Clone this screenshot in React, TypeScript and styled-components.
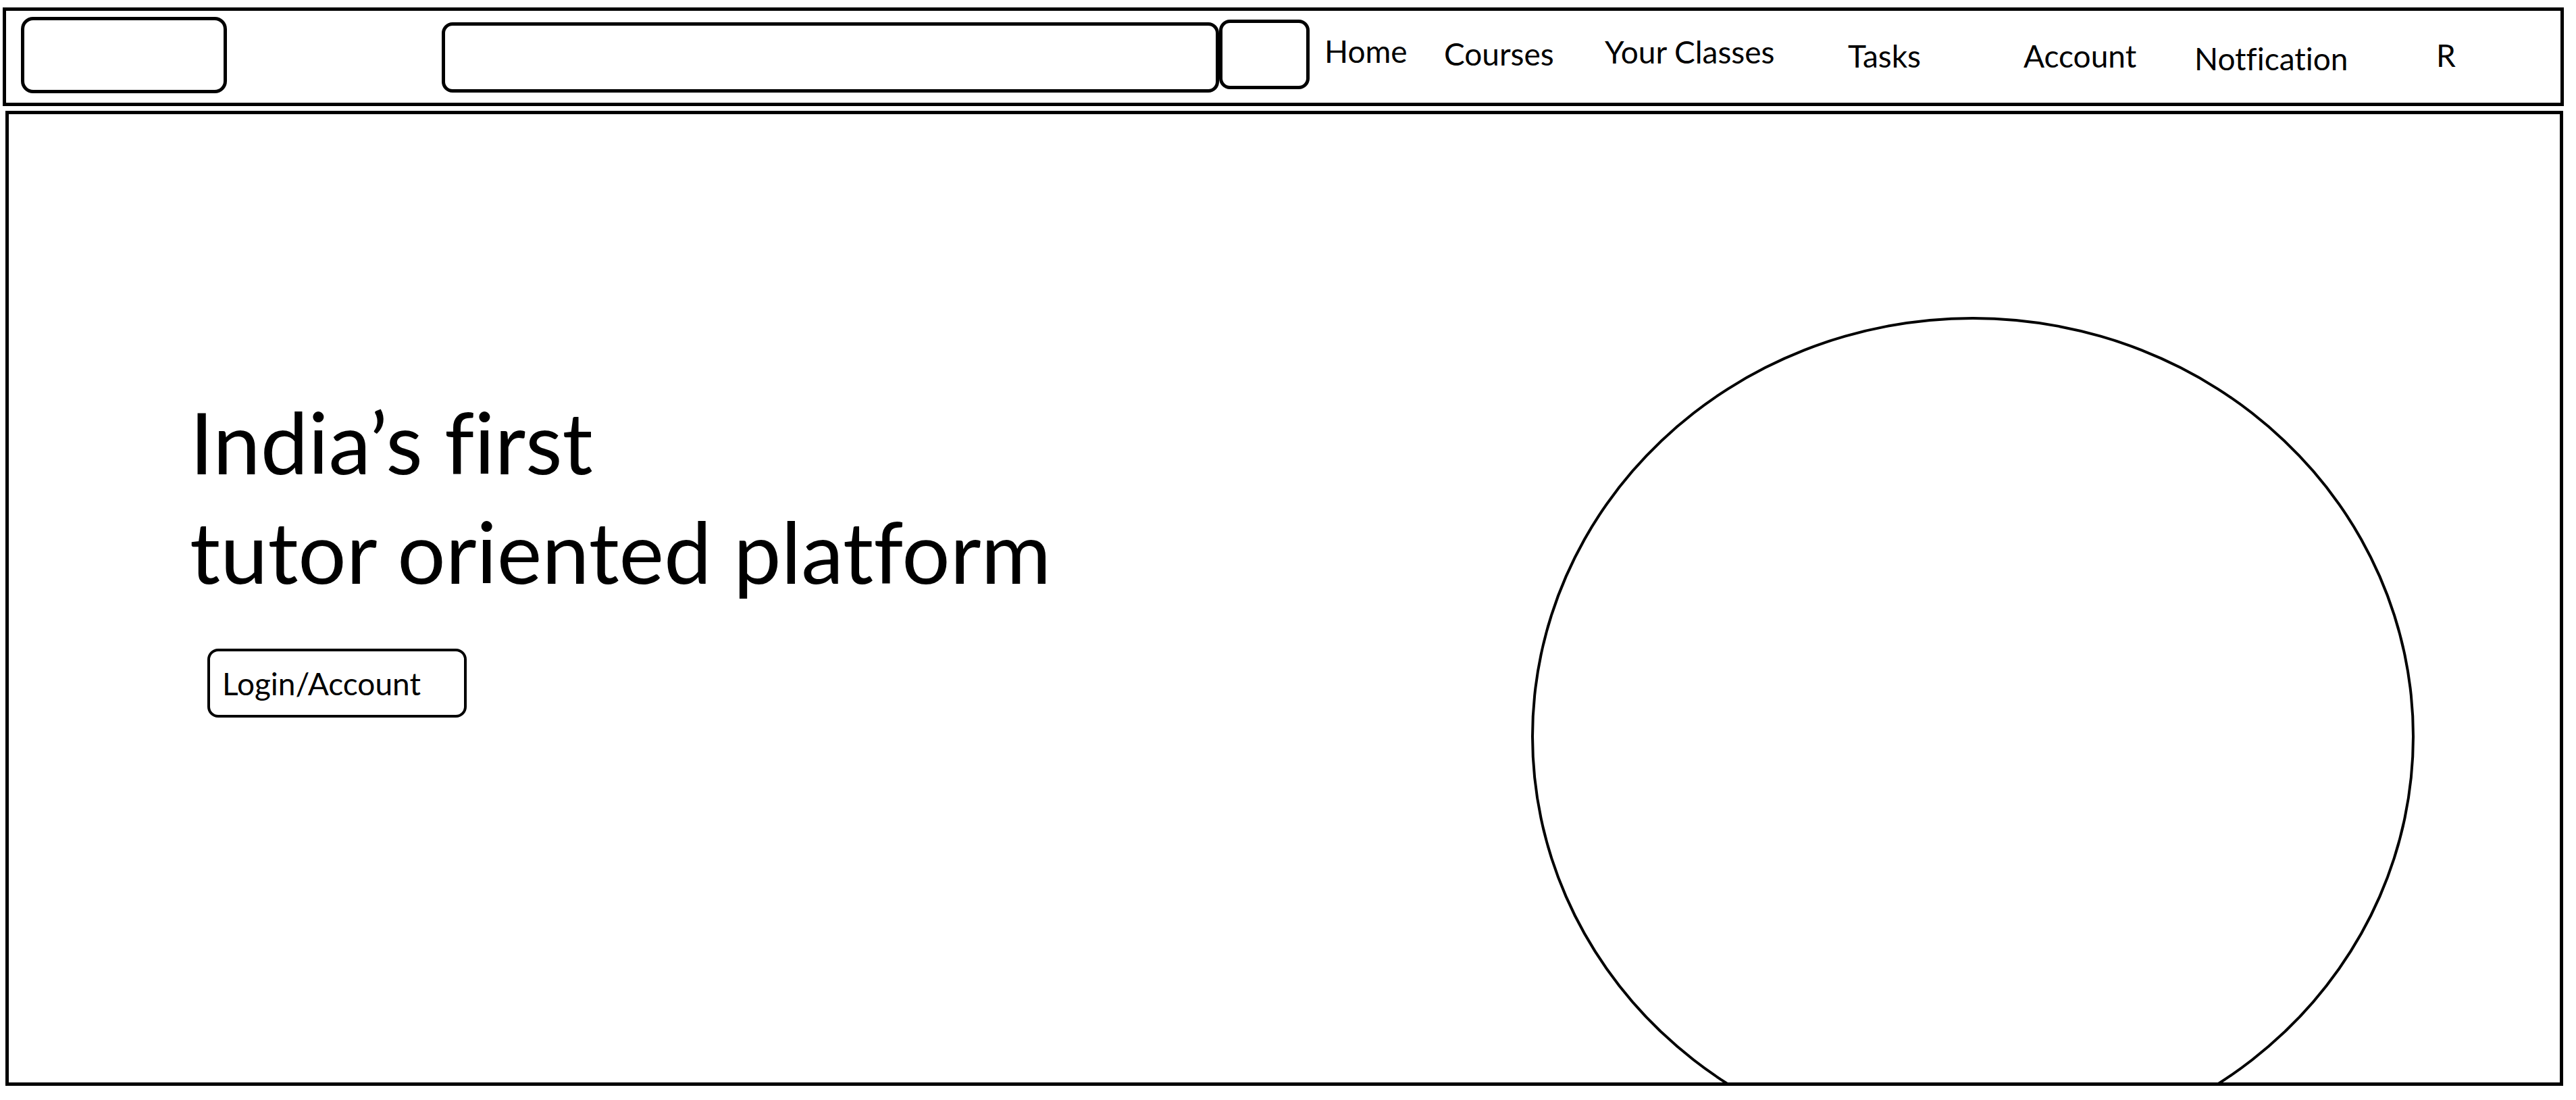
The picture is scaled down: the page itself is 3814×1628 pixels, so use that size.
import React from "react";
import styled, { createGlobalStyle } from "styled-components";

const GlobalStyle = createGlobalStyle`
  html, body {
    margin: 0;
    padding: 0;
    background: #fff;
  }
  body {
    font-family: "Lato", "Open Sans", sans-serif;
    font-variant-ligatures: none;
    color: #000;
  }
`;

const Page = styled.div`
  width: 3814px;
  height: 1628px;
  padding-top: 11px;
  box-sizing: border-box;
  display: flex;
  flex-direction: column;
`;

const NavBar = styled.header`
  margin: 0 18px 0 4px;
  height: 146px;
  box-sizing: border-box;
  border: 5px solid #000;
  display: flex;
  align-items: flex-start;
`;

const LogoBox = styled.div`
  width: 305px;
  height: 113px;
  margin: 9px 0 0 22px;
  box-sizing: border-box;
  border: 5px solid #000;
  border-radius: 18px;
`;

const SearchBox = styled.div`
  width: 1151px;
  height: 104px;
  margin: 17px 0 0 318px;
  box-sizing: border-box;
  border: 5px solid #000;
  border-radius: 16px;
`;

const SearchButton = styled.div`
  width: 134px;
  height: 103px;
  margin-top: 13px;
  box-sizing: border-box;
  border: 5px solid #000;
  border-radius: 16px;
`;

const NavLinks = styled.nav`
  display: flex;
  margin-left: 22px;
`;

const NavLink = styled.span<{ $w?: number; $dy: number }>`
  width: ${(p) => (p.$w ? `${p.$w}px` : "auto")};
  margin-top: ${(p) => p.$dy}px;
  font-size: 46px;
  line-height: 1;
  white-space: nowrap;
`;

const Main = styled.main`
  margin: 7px 19px 0 8px;
  height: 1443px;
  box-sizing: border-box;
  border: 5px solid #000;
  display: flex;
  align-items: flex-start;
  padding-left: 268px;
  overflow: hidden;
`;

const Intro = styled.section`
  width: 1986px;
  flex: none;
  padding-top: 404px;
`;

const Headline = styled.h1`
  margin: 0;
  font-size: 126px;
  font-weight: 400;
  line-height: 162px;
`;

const LoginButton = styled.button`
  margin: 63px 0 0 26px;
  width: 384px;
  height: 102px;
  padding: 0 0 0 18px;
  box-sizing: border-box;
  border: 4px solid #000;
  border-radius: 16px;
  background: #fff;
  font-family: inherit;
  font-size: 46px;
  color: #000;
  text-align: left;
`;

const Globe = styled.div`
  flex: none;
  width: 1308px;
  height: 1242px;
  margin-top: 300px;
  box-sizing: border-box;
  border: 4px solid #000;
  border-radius: 50%;
`;

const links = [
  { label: "Home", w: 177, dy: 37 },
  { label: "Courses", w: 238, dy: 41 },
  { label: "Your Classes", w: 360, dy: 38 },
  { label: "Tasks", w: 260, dy: 44 },
  { label: "Account", w: 253, dy: 44 },
  { label: "Notfication", w: 358, dy: 48 },
  { label: "R", dy: 43 },
];

const App = () => {
  return (
    <>
      <GlobalStyle />
      <Page>
        <NavBar>
          <LogoBox />
          <SearchBox />
          <SearchButton />
          <NavLinks>
            {links.map((l) => (
              <NavLink key={l.label} $w={l.w} $dy={l.dy}>
                {l.label}
              </NavLink>
            ))}
          </NavLinks>
        </NavBar>
        <Main>
          <Intro>
            <Headline>
              India’s first
              <br />
              tutor oriented platform
            </Headline>
            <LoginButton>Login/Account</LoginButton>
          </Intro>
          <Globe />
        </Main>
      </Page>
    </>
  );
};

export default App;
